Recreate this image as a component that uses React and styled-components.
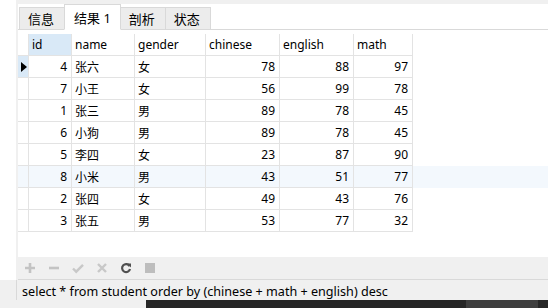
import styled, { createGlobalStyle } from "styled-components";

const GlobalStyle = createGlobalStyle`
  html, body {
    margin: 0;
    padding: 0;
    background: #ffffff;
  }
  body {
    font-family: "Noto Sans", "Noto Sans CJK SC", sans-serif;
    color: #000;
  }
`;

const columns = [
  { key: "id", label: "id", width: 43, align: "right" },
  { key: "name", label: "name", width: 63, align: "left" },
  { key: "gender", label: "gender", width: 71, align: "left" },
  { key: "chinese", label: "chinese", width: 74, align: "right" },
  { key: "english", label: "english", width: 74, align: "right" },
  { key: "math", label: "math", width: 59, align: "right" },
];

const rows = [
  { id: 4, name: "张六", gender: "女", chinese: 78, english: 88, math: 97 },
  { id: 7, name: "小王", gender: "女", chinese: 56, english: 99, math: 78 },
  { id: 1, name: "张三", gender: "男", chinese: 89, english: 78, math: 45 },
  { id: 6, name: "小狗", gender: "男", chinese: 89, english: 78, math: 45 },
  { id: 5, name: "李四", gender: "女", chinese: 23, english: 87, math: 90 },
  { id: 8, name: "小米", gender: "男", chinese: 43, english: 51, math: 77, hover: true },
  { id: 2, name: "张四", gender: "女", chinese: 49, english: 43, math: 76 },
  { id: 3, name: "张五", gender: "男", chinese: 53, english: 77, math: 32 },
];

const tabs = [
  { label: "信息" },
  { label: "结果 1", active: true },
  { label: "剖析" },
  { label: "状态" },
];

const template = `11px ${columns.map((c) => c.width + "px").join(" ")}`;

const App = () => {
  return (
    <Window>
      <GlobalStyle />
      <Main>
        <Gutter />
        <Panel>
          <TabBar>
            {tabs.map((t) => (
              <Tab key={t.label} active={t.active}>
                {t.label}
              </Tab>
            ))}
          </TabBar>
          <GridArea>
            <Grid>
              <HeaderRow>
                <Corner />
                {columns.map((c) => (
                  <HeadCell key={c.key} selected={c.key === "id"}>
                    {c.label}
                  </HeadCell>
                ))}
              </HeaderRow>
              {rows.map((r, i) => (
                <Row key={r.id} hover={r.hover}>
                  <RowHead current={i === 0}>{i === 0 && <Arrow />}</RowHead>
                  {columns.map((c) => (
                    <Cell key={c.key} align={c.align}>
                      {r[c.key]}
                    </Cell>
                  ))}
                </Row>
              ))}
            </Grid>
          </GridArea>
          <Toolbar>
            <ToolIcon>
              <svg width="12" height="12" viewBox="0 0 12 12">
                <path d="M6 1v10M1 6h10" stroke="#c3c3c3" strokeWidth="2.6" />
              </svg>
            </ToolIcon>
            <ToolIcon>
              <svg width="12" height="12" viewBox="0 0 12 12">
                <path d="M1 6h10" stroke="#c3c3c3" strokeWidth="2.6" />
              </svg>
            </ToolIcon>
            <ToolIcon>
              <svg width="12" height="12" viewBox="0 0 12 12">
                <path d="M1 6.5l3.2 3.2L11 2.8" stroke="#c8c8c8" strokeWidth="2.4" fill="none" />
              </svg>
            </ToolIcon>
            <ToolIcon>
              <svg width="12" height="12" viewBox="0 0 12 12">
                <path d="M2 2l8 8M10 2l-8 8" stroke="#c8c8c8" strokeWidth="2.4" />
              </svg>
            </ToolIcon>
            <ToolIcon>
              <svg width="12" height="12" viewBox="0 0 12 12">
                <path
                  d="M9.6 4.2A4 4 0 1 0 10 7"
                  stroke="#505050"
                  strokeWidth="2.2"
                  fill="none"
                />
                <path d="M7 1.5h4v4z" fill="#505050" />
              </svg>
            </ToolIcon>
            <ToolIcon>
              <svg width="12" height="12" viewBox="0 0 12 12">
                <rect x="1" y="1" width="10" height="10" fill="#bdbdbd" />
              </svg>
            </ToolIcon>
          </Toolbar>
        </Panel>
      </Main>
      <StatusBar>
        <StatusLead />
        <StatusText>select * from student order by (chinese + math + english) desc</StatusText>
      </StatusBar>
      <Taskbar>
        <TaskPart tone="light" w="146px" />
        <TaskPart tone="dark" w="320px" />
        <TaskPart tone="mid" w="72px" />
        <TaskPart tone="dark" w="10px" />
      </Taskbar>
    </Window>
  );
};

const Window = styled.div`
  width: 548px;
  height: 308px;
  display: flex;
  flex-direction: column;
  overflow: hidden;
  background: #fff;
`;

const Main = styled.div`
  flex: 1;
  display: flex;
  min-height: 0;
`;

const Gutter = styled.div`
  width: 16px;
  background: #fff;
`;

const Panel = styled.div`
  flex: 1;
  display: flex;
  flex-direction: column;
  border-left: 2px solid #f0f0f0;
`;

const TabBar = styled.div`
  height: 25px;
  display: flex;
  align-items: flex-end;
  padding-left: 1px;
  border-top: 4px solid #f0f0f0;
  border-bottom: 1px solid #d9d9d9;
  background: #fff;
`;

const Tab = styled.div`
  box-sizing: border-box;
  height: ${(p) => (p.active ? "26px" : "22px")};
  margin-bottom: ${(p) => (p.active ? "-1px" : "0")};
  padding: 0 ${(p) => (p.active ? "9px" : "8px")};
  min-width: 46px;
  display: flex;
  align-items: center;
  font-size: 13px;
  background: ${(p) => (p.active ? "#fff" : "#ececec")};
  border: 1px solid #d9d9d9;
  border-bottom: ${(p) => (p.active ? "1px solid #fff" : "none")};
  margin-right: -1px;
  color: #000;
`;

const GridArea = styled.div`
  flex: 1;
  background: #fff;
  padding-top: 4px;
`;

const Grid = styled.div`
  display: flex;
  flex-direction: column;
  font-size: 12px;
`;

const HeaderRow = styled.div`
  display: grid;
  grid-template-columns: ${template};
  height: 22px;
`;

const Row = styled.div`
  display: grid;
  grid-template-columns: ${template};
  height: 22px;
  background: ${(p) => (p.hover ? "#f3f8fd" : "#fff")};
`;

const Corner = styled.div`
  border-right: 1px solid #e3e3e3;
  border-bottom: 1px solid #e3e3e3;
`;

const HeadCell = styled.div`
  display: flex;
  align-items: center;
  padding: 0 3px;
  background: ${(p) => (p.selected ? "#d9e9f7" : "#fff")};
  border-right: 1px solid #e3e3e3;
  border-bottom: 1px solid #e3e3e3;
  overflow: hidden;
  white-space: nowrap;
`;

const RowHead = styled.div`
  display: flex;
  align-items: center;
  justify-content: center;
  background: ${(p) => (p.current ? "#d9e9f7" : "transparent")};
  border-right: 1px solid #e3e3e3;
  border-bottom: 1px solid #e3e3e3;
`;

const Arrow = styled.span`
  width: 0;
  height: 0;
  border-top: 5px solid transparent;
  border-bottom: 5px solid transparent;
  border-left: 6px solid #000;
  margin-left: 1px;
`;

const Cell = styled.div`
  display: flex;
  align-items: center;
  justify-content: ${(p) => (p.align === "right" ? "flex-end" : "flex-start")};
  padding: 0 4px 0 3px;
  border-right: 1px solid #e3e3e3;
  border-bottom: 1px solid #e3e3e3;
  white-space: nowrap;
`;

const Toolbar = styled.div`
  height: 22px;
  display: flex;
  align-items: center;
  gap: 11px;
  padding-left: 5px;
  background: #f0f0f0;
  border-bottom: 1px solid #d9d9d9;
`;

const ToolIcon = styled.div`
  width: 13px;
  height: 14px;
  display: flex;
  align-items: center;
  justify-content: center;
`;

const StatusBar = styled.div`
  height: 20px;
  display: flex;
  align-items: center;
  background: #f0f0f0;
`;

const StatusLead = styled.div`
  width: 16px;
  height: 100%;
  border-right: 1px solid #d9d9d9;
`;

const StatusText = styled.div`
  padding-left: 5px;
  padding-top: 2px;
  font-size: 12.6px;
  white-space: nowrap;
  color: #000;
`;

const Taskbar = styled.div`
  height: 8px;
  display: flex;
`;

const TaskPart = styled.div`
  width: ${(p) => p.w};
  flex: none;
  background: ${(p) =>
    p.tone === "light" ? "#f0f0f0" : p.tone === "mid" ? "#3e3e3e" : "#262626"};
  &:last-child {
    flex: 1;
  }
`;

export default App;
